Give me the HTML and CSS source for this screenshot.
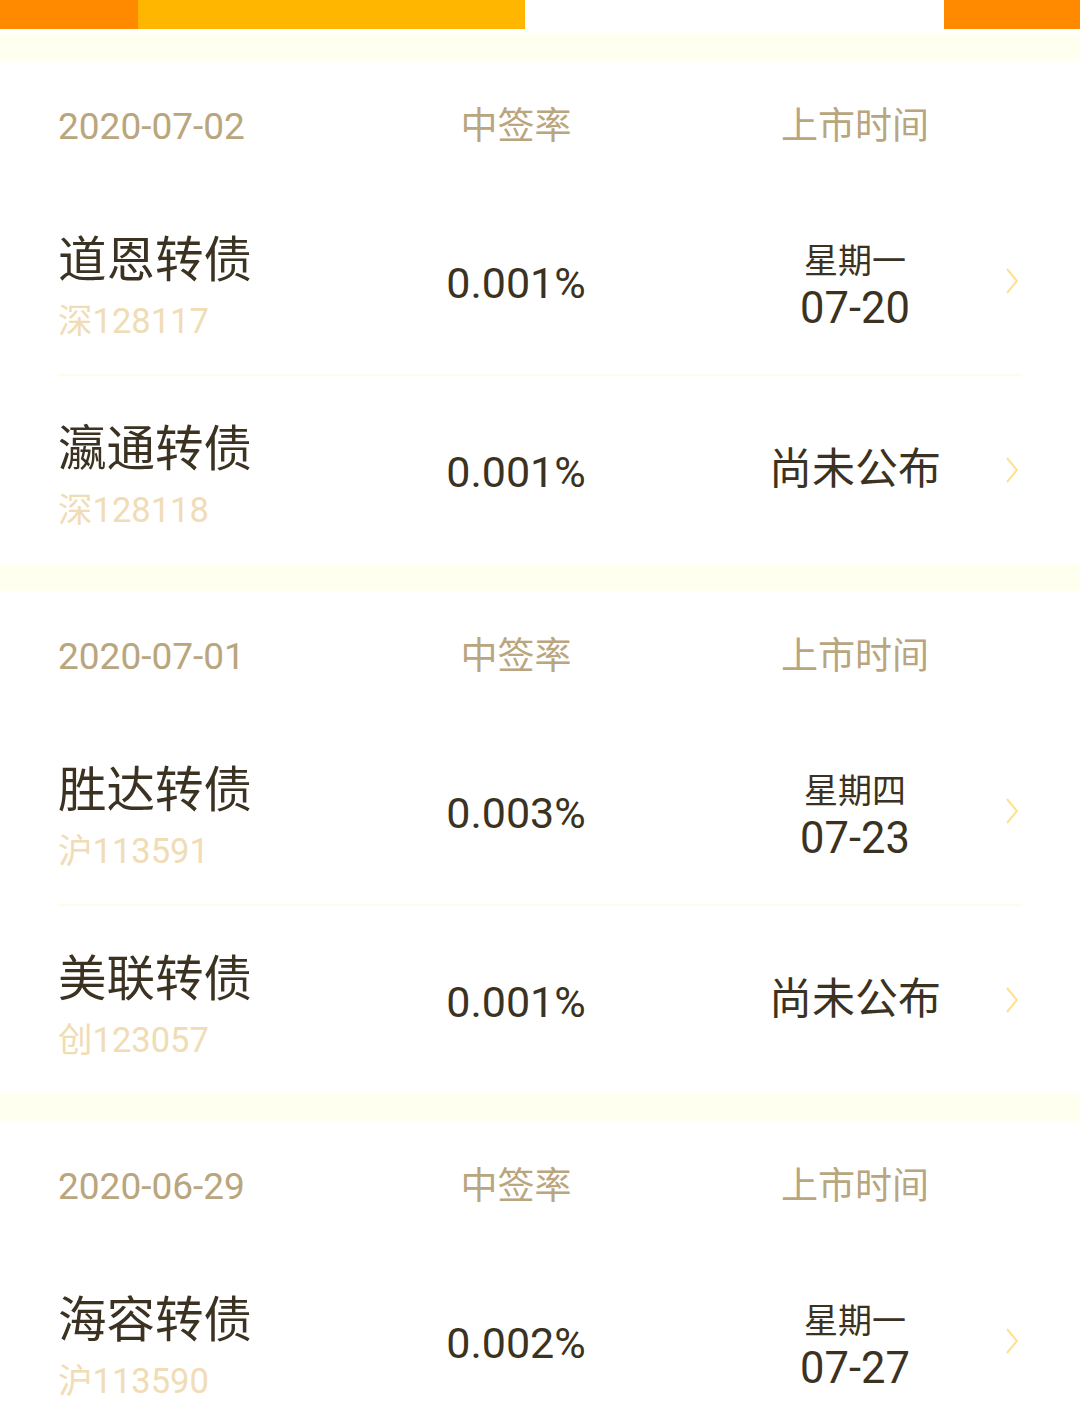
FILE: index.html
```html
<!DOCTYPE html>
<html lang="zh">
<head>
<meta charset="utf-8">
<title>可转债中签</title>
<link rel="stylesheet" href="styles.css">
</head>
<body>
<div class="topbar">
  <div class="seg seg-a"></div>
  <div class="seg seg-b"></div>
  <div class="seg seg-c"></div>
  <div class="seg seg-d"></div>
</div>
<div class="band first"></div>

<section class="group">
  <div class="grid head">
    <div class="date">2020-07-02</div>
    <div class="col-mid">中签率</div>
    <div class="col-right">上市时间</div>
    <div></div>
  </div>
  <div class="grid row">
    <div class="left"><div class="name">道恩转债</div><div class="code">深128117</div></div>
    <div class="col-mid value">0.001%</div>
    <div class="col-right when"><div class="week">星期一</div><div class="day">07-20</div></div>
    <svg class="chev" viewBox="0 0 12 26"><path d="M1 1 L11 13 L1 25" fill="none" stroke="#ffe08c" stroke-width="2"/></svg>
  </div>
  <div class="sep"></div>
  <div class="grid row">
    <div class="left"><div class="name">瀛通转债</div><div class="code">深128118</div></div>
    <div class="col-mid value">0.001%</div>
    <div class="col-right"><div class="pending">尚未公布</div></div>
    <svg class="chev" viewBox="0 0 12 26"><path d="M1 1 L11 13 L1 25" fill="none" stroke="#ffe08c" stroke-width="2"/></svg>
  </div>
</section>
<div class="band"></div>

<section class="group">
  <div class="grid head">
    <div class="date">2020-07-01</div>
    <div class="col-mid">中签率</div>
    <div class="col-right">上市时间</div>
    <div></div>
  </div>
  <div class="grid row">
    <div class="left"><div class="name">胜达转债</div><div class="code">沪113591</div></div>
    <div class="col-mid value">0.003%</div>
    <div class="col-right when"><div class="week">星期四</div><div class="day">07-23</div></div>
    <svg class="chev" viewBox="0 0 12 26"><path d="M1 1 L11 13 L1 25" fill="none" stroke="#ffe08c" stroke-width="2"/></svg>
  </div>
  <div class="sep"></div>
  <div class="grid row">
    <div class="left"><div class="name">美联转债</div><div class="code">创123057</div></div>
    <div class="col-mid value">0.001%</div>
    <div class="col-right"><div class="pending">尚未公布</div></div>
    <svg class="chev" viewBox="0 0 12 26"><path d="M1 1 L11 13 L1 25" fill="none" stroke="#ffe08c" stroke-width="2"/></svg>
  </div>
</section>
<div class="band"></div>

<section class="group">
  <div class="grid head">
    <div class="date">2020-06-29</div>
    <div class="col-mid">中签率</div>
    <div class="col-right">上市时间</div>
    <div></div>
  </div>
  <div class="grid row">
    <div class="left"><div class="name">海容转债</div><div class="code">沪113590</div></div>
    <div class="col-mid value">0.002%</div>
    <div class="col-right when"><div class="week">星期一</div><div class="day">07-27</div></div>
    <svg class="chev" viewBox="0 0 12 26"><path d="M1 1 L11 13 L1 25" fill="none" stroke="#ffe08c" stroke-width="2"/></svg>
  </div>
</section>
</body>
</html>
```

FILE: styles.css
```css
* { box-sizing: border-box; }
html, body { margin: 0; padding: 0; background: #fff; }
body {
  width: 1080px;
  height: 1410px;
  overflow: hidden;
  font-family: Roboto, "Noto Sans CJK SC", sans-serif;
  color: #3b3222;
}
.topbar { display: flex; height: 29px; }
.seg { height: 100%; }
.seg-a { width: 138px; background: #ff8a00; }
.seg-b { width: 387px; background: #ffb600; }
.seg-c { width: 419px; background: #fff; }
.seg-d { width: 136px; background: #ff8a00; }

.band { height: 28px; background: #fffff0; }
.band.first { margin-top: 4px; }

.grid {
  display: grid;
  grid-template-columns: 288px 340px 1fr 12px;
  padding: 0 62px 0 58px;
  align-items: center;
}
.head {
  height: 126px;
  padding-top: 4px;
  font-size: 37px;
  color: #b9a57e;
  line-height: 1;
}
.col-mid { text-align: center; }
.col-right { text-align: center; padding-left: 18px; }

.row { height: 187px; }
.left { padding-top: 12px; }
.name { font-size: 48.5px; line-height: 60px; color: #3b3222; }
.code { font-size: 34.5px; line-height: 44px; margin-top: 8px; color: #f0dcb5; }
.value { font-size: 43px; line-height: 1; padding-top: 6px; }
.when { padding-top: 10px; }
.week { font-size: 34px; line-height: 46px; }
.day { font-size: 43.5px; line-height: 50px; }
.pending { font-size: 43px; line-height: 1; }
.chev { width: 12px; height: 26px; display: block; }
.sep { height: 2px; margin: 0 58px; background: #fffdea; }
```
